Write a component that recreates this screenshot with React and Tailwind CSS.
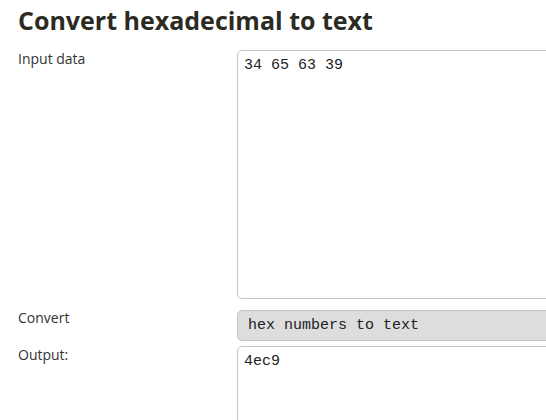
export default function App() {
  return (
    <div className="w-[546px] h-[420px] overflow-hidden bg-white font-['Open_Sans',sans-serif] text-[#333]">
      <h1 className="pl-[18px] pt-[3px] text-[25px] leading-[34px] font-bold text-[#2b2b24]">
        Convert hexadecimal to text
      </h1>
      <div className="mt-[13px] grid grid-cols-[237px_400px]">
        <div className="pl-[18px] text-[14px] leading-[18px] pt-[0px]">Input data</div>
        <textarea
          className="h-[249px] w-[400px] resize-none rounded-[5px] border border-[#c4c4c4] px-[6px] py-[6px] font-['Liberation_Mono',monospace] text-[15px] leading-[18px] text-[#222] outline-none"
          defaultValue="34 65 63 39"
        />
        <div className="pl-[18px] text-[14px] leading-[18px] pt-[10px]">Convert</div>
        <div className="mt-[11px] flex h-[31px] w-[400px] items-center rounded-[5px] border border-[#c4c4c4] bg-[#dddddd] px-[10px] pt-[2px] font-['Liberation_Mono',monospace] text-[15px] text-[#222]">
          hex numbers to text
        </div>
        <div className="pl-[18px] text-[14px] leading-[18px] pt-[5px]">Output:</div>
        <textarea
          className="mt-[5px] h-[120px] w-[400px] resize-none rounded-[5px] border border-[#c4c4c4] px-[6px] py-[6px] font-['Liberation_Mono',monospace] text-[15px] leading-[18px] text-[#222] outline-none"
          defaultValue="4ec9"
        />
      </div>
    </div>
  );
}
